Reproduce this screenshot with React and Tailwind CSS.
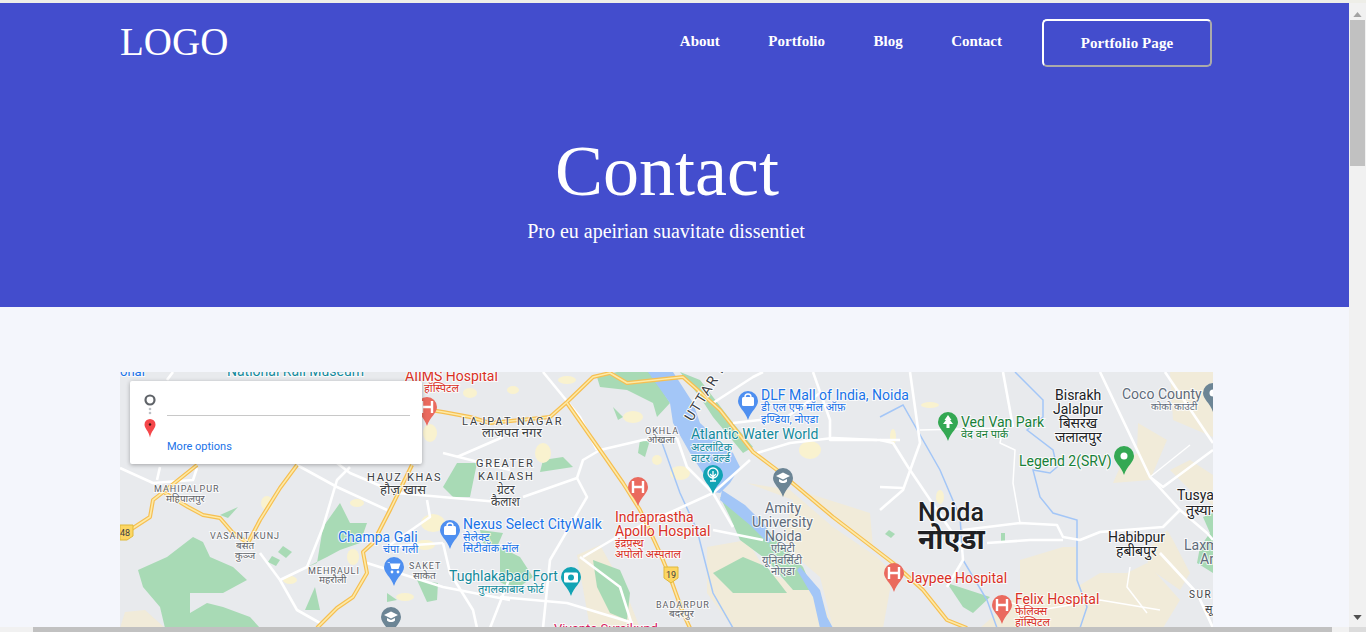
const navLinks = ["About", "Portfolio", "Blog", "Contact"];

const greens = [
  "M193 537 L167 557 L138 570 L143 587 L160 607 L165 628 L260 628 L250 617 L223 607 L207 603 L190 613 L190 593 L223 593 L247 580 L233 567 L210 557 L203 542Z",
  "M317 563 L323 527 L340 503 L350 523 L367 523 L360 543 L340 550 L327 557 L307 567Z",
  "M315 587 L320 610 L305 610Z",
  "M220 515 L238 507 L228 518Z",
  "M283 546 L292 552 L286 558 L278 552Z",
  "M272 556 L280 560 L276 566 L268 562Z",
  "M457 463 L477 463 L470 497 L453 497 L443 487Z",
  "M417 580 L438 583 L437 600 L427 602Z",
  "M387 593 L397 600 L387 602Z",
  "M480 530 L503 533 L497 547 L483 543Z",
  "M593 560 L620 570 L630 593 L627 620 L610 613 L597 587Z",
  "M500 547 L520 557 L533 577 L515 590 L500 582Z",
  "M543 460 L563 457 L573 467 L540 472Z",
  "M613 407 L623 417 L618 420Z",
  "M640 440 L650 440 L645 457 L638 453Z",
  "M597 377 L617 372 L650 372 L670 403 L657 417 L653 403 L627 390 L600 387Z",
  "M680 372 L700 380 L733 423 L753 447 L743 453 L713 417 L700 397Z",
  "M720 497 L760 520 L777 540 L803 567 L813 590 L793 590 L767 560 L740 540 L730 517Z",
  "M713 573 L743 557 L767 567 L787 593 L733 593Z",
  "M947 583 L990 597 L973 613 L963 607Z",
  "M1203 517 L1213 513 L1213 573 L1197 563 L1200 547 L1210 533Z",
  "M1001 533 L1005 533 L1005 541 L1001 541Z",
  "M889 530 L895 534 L891 538 L885 534Z",
];

const sands = [
  "M747 483 L790 490 L833 527 L877 557 L893 573 L883 628 L833 628 L820 577 L800 560 L783 540 L793 500Z",
  "M707 547 L747 540 L767 573 L820 593 L833 628 L733 628 L707 593Z",
  "M807 493 L870 513 L873 547 L833 520Z",
  "M1170 372 L1213 372 L1213 437 L1173 420Z",
  "M1138 423 L1167 440 L1150 480 L1113 483 L1120 467 L1137 453Z",
  "M1170 470 L1190 460 L1213 475 L1213 505 L1190 490Z",
  "M1020 560 L1063 547 L1077 547 L1077 587 L1100 573 L1127 573 L1147 563 L1180 600 L1163 628 L980 628 L1020 593Z",
  "M1167 530 L1173 540 L1190 573 L1180 590 L1147 567 L1150 547Z",
  "M577 555 L600 545 L625 590 L640 628 L590 628Z",
  "M120 628 L125 612 L145 610 L165 628Z",
];

const blobs = [
  [433, 523, 12, 9], [430, 433, 7, 9], [290, 580, 7, 4], [353, 557, 6, 8],
  [357, 503, 7, 4], [267, 503, 6, 7], [543, 453, 8, 10], [680, 473, 10, 7],
  [633, 417, 10, 6], [810, 450, 11, 9], [657, 460, 5, 5], [567, 380, 9, 4],
  [470, 393, 7, 5], [513, 390, 6, 4], [930, 405, 9, 3], [893, 437, 3, 8],
  [940, 497, 4, 7], [425, 545, 10, 5], [405, 597, 9, 4],
];

const whiteRoads = [
  "M910 372 L920 443 L903 490 L880 510",
  "M880 440 L893 443 L908 467 L962 547 L963 560 L947 587",
  "M1003 372 L1013 427",
  "M1100 372 L1150 477 L1180 510 L1207 533 L1213 540",
  "M1165 372 L1213 443",
  "M1150 477 L1163 487 L1213 450",
  "M1180 510 L1163 527 L1100 532 L1080 540 L1063 537 L1057 525 L1020 523 L963 530",
  "M987 543 L1030 540 L1063 540",
  "M1160 553 L1197 593 L1213 628",
  "M880 487 L903 488",
  "M713 403 L753 377 L763 372",
  "M813 372 L830 420 L830 440 L900 440",
  "M733 423 L787 417 L820 393",
  "M757 453 L790 443 L833 438 L877 440",
  "M713 493 L750 460",
  "M583 557 L617 537 L660 517 L713 493",
  "M543 372 L580 417 L597 450",
  "M523 497 L577 478 L583 460 L600 450 L643 440 L677 438",
  "M577 478 L587 497 L550 560 L543 628",
  "M677 438 L687 467 L713 493 L733 527",
  "M713 530 L763 540",
  "M500 597 L567 603 L633 623",
  "M580 557 L620 587 L633 628",
  "M120 468 L153 483 L193 480 L197 468",
  "M297 465 L337 487 L387 510",
  "M350 467 L337 480 L323 527 L307 567 L280 580",
  "M337 463 L350 473 L397 493 L510 503",
  "M260 553 L280 580 L297 610 L320 623",
  "M367 563 L443 587 L510 600",
  "M387 547 L443 543",
  "M443 543 L450 573 L473 610 L477 628",
  "M427 500 L430 517 L407 533 L387 547",
  "M443 453 L510 470",
  "M490 628 L510 577",
  "M457 457 L503 437",
  "M160 467 L157 480",
  "M173 372 L167 380",
];

const thinRoads = [
  "M920 430 L1003 428 L1000 443 L1015 450 L1013 483 L1020 523",
  "M1130 567 L1127 587 L1147 613",
  "M1150 477 L1190 445",
  "M1000 600 L1040 610 L1100 600 L1160 610",
];

const waterLines = [
  "M1015 372 L1043 400 L1043 417 L1027 430 L1053 450 L1057 467 L1050 473 L1033 470 L1040 497 L1053 513 L1077 520 L1077 580 L1087 607 L1080 628",
  "M880 417 L903 405 L940 470 L960 517 L963 560 L987 600 L997 628",
  "M660 437 L680 493 L697 530 L713 593 L733 628",
];

const TEAL = "#138a9c";

const labels = [
  { t: "onal", x: 120, y: 376, c: "#1a73e8", s: 13 },
  { t: "National Rail Museum", x: 227, y: 376, c: TEAL, s: 14 },
  { t: "AIIMS Hospital", x: 405, y: 381, c: "#d93025", s: 14 },
  { t: "हॉस्पिटल", x: 424, y: 392, c: "#d93025", s: 11 },
  { t: "LAJPAT NAGAR", x: 462, y: 425, c: "#3c4043", s: 11, l: 2 },
  { t: "लाजपत नगर", x: 482, y: 437, c: "#3c4043", s: 13 },
  { t: "GREATER", x: 476, y: 467, c: "#3c4043", s: 11, l: 1.7 },
  { t: "KAILASH", x: 478, y: 480, c: "#3c4043", s: 11, l: 1.7 },
  { t: "ग्रेटर", x: 497, y: 494, c: "#3c4043", s: 12 },
  { t: "कैलाश", x: 491, y: 506, c: "#3c4043", s: 12 },
  { t: "HAUZ KHAS", x: 367, y: 481, c: "#3c4043", s: 11, l: 1.7 },
  { t: "हौज़ खास", x: 380, y: 494, c: "#3c4043", s: 13 },
  { t: "MAHIPALPUR", x: 154, y: 492, c: "#5f6368", s: 9, l: 1 },
  { t: "महिपालपुर", x: 166, y: 502, c: "#5f6368", s: 10 },
  { t: "VASANT KUNJ", x: 210, y: 539, c: "#5f6368", s: 9, l: 1 },
  { t: "बसंत", x: 236, y: 549, c: "#5f6368", s: 10 },
  { t: "कुञ्ज", x: 235, y: 559, c: "#5f6368", s: 10 },
  { t: "MEHRAULI", x: 308, y: 574, c: "#5f6368", s: 9, l: 1 },
  { t: "महरौली", x: 319, y: 583, c: "#5f6368", s: 10 },
  { t: "SAKET", x: 409, y: 569, c: "#5f6368", s: 9, l: 1 },
  { t: "साकेत", x: 413, y: 579, c: "#5f6368", s: 10 },
  { t: "Champa Gali", x: 338, y: 542, c: "#1a73e8", s: 14 },
  { t: "चंपा गली", x: 383, y: 553, c: "#1a73e8", s: 11 },
  { t: "Nexus Select CityWalk", x: 463, y: 529, c: "#1a73e8", s: 14 },
  { t: "सेलेक्ट", x: 463, y: 541, c: "#1a73e8", s: 11 },
  { t: "सिटीवॉक मॉल", x: 463, y: 552, c: "#1a73e8", s: 11 },
  { t: "Tughlakabad Fort", x: 449, y: 581, c: TEAL, s: 14 },
  { t: "तुगलकाबाद फोर्ट", x: 478, y: 593, c: TEAL, s: 11 },
  { t: "OKHLA", x: 645, y: 434, c: "#5f6368", s: 9, l: 1 },
  { t: "ओखला", x: 647, y: 443, c: "#5f6368", s: 10 },
  { t: "DLF Mall of India, Noida", x: 761, y: 400, c: "#1a73e8", s: 14 },
  { t: "डी एल एफ मॉल ऑफ़", x: 761, y: 411, c: "#1a73e8", s: 11 },
  { t: "इण्डिया, नोएडा", x: 761, y: 423, c: "#1a73e8", s: 11 },
  { t: "Atlantic Water World", x: 691, y: 439, c: TEAL, s: 14 },
  { t: "अटलांटिक", x: 691, y: 451, c: TEAL, s: 11 },
  { t: "वाटर वर्ल्ड", x: 691, y: 462, c: TEAL, s: 11 },
  { t: "Indraprastha", x: 615, y: 522, c: "#d93025", s: 14 },
  { t: "Apollo Hospital", x: 615, y: 536, c: "#d93025", s: 14 },
  { t: "इंद्रप्रस्थ", x: 615, y: 547, c: "#d93025", s: 11 },
  { t: "अपोलो अस्पताल", x: 615, y: 558, c: "#d93025", s: 11 },
  { t: "Amity", x: 765, y: 513, c: "#5f6b7a", s: 14 },
  { t: "University", x: 752, y: 527, c: "#5f6b7a", s: 14 },
  { t: "Noida", x: 765, y: 541, c: "#5f6b7a", s: 14 },
  { t: "एमिटी", x: 771, y: 552, c: "#5f6b7a", s: 11 },
  { t: "यूनिवर्सिटी", x: 762, y: 564, c: "#5f6b7a", s: 11 },
  { t: "नोएडा", x: 771, y: 575, c: "#5f6b7a", s: 11 },
  { t: "BADARPUR", x: 656, y: 608, c: "#5f6368", s: 9, l: 1 },
  { t: "बदरपुर", x: 669, y: 617, c: "#5f6368", s: 10 },
  { t: "Vivanta Surajkund", x: 554, y: 633, c: "#d81b60", s: 13 },
  { t: "Bisrakh", x: 1055, y: 400, c: "#202124", s: 14 },
  { t: "Jalalpur", x: 1053, y: 414, c: "#202124", s: 14 },
  { t: "बिसरख", x: 1059, y: 428, c: "#202124", s: 14 },
  { t: "जलालपुर", x: 1055, y: 442, c: "#202124", s: 14 },
  { t: "Coco County", x: 1122, y: 399, c: "#5f6b7a", s: 14 },
  { t: "कोको काउंटी", x: 1151, y: 410, c: "#5f6b7a", s: 10 },
  { t: "Ved Van Park", x: 961, y: 427, c: "#188038", s: 14 },
  { t: "वेद वन पार्क", x: 961, y: 438, c: "#188038", s: 11 },
  { t: "Legend 2(SRV)", x: 1019, y: 466, c: "#188038", s: 14 },
  { t: "Noida", x: 918, y: 521, c: "#202124", s: 25, w: 500 },
  { t: "नोएडा", x: 918, y: 549, c: "#202124", s: 28, w: 700 },
  { t: "Habibpur", x: 1108, y: 542, c: "#202124", s: 14 },
  { t: "हबीबपुर", x: 1116, y: 556, c: "#202124", s: 14 },
  { t: "Tusyana", x: 1177, y: 500, c: "#202124", s: 14 },
  { t: "तुस्याना", x: 1186, y: 515, c: "#202124", s: 14 },
  { t: "Laxmi", x: 1184, y: 550, c: "#5f6b7a", s: 14 },
  { t: "Ar", x: 1200, y: 564, c: "#5f6b7a", s: 14 },
  { t: "SUR", x: 1189, y: 598, c: "#3c4043", s: 10, l: 1.6 },
  { t: "सू", x: 1205, y: 613, c: "#3c4043", s: 11 },
  { t: "Jaypee Hospital", x: 907, y: 583, c: "#d93025", s: 14 },
  { t: "Felix Hospital", x: 1015, y: 604, c: "#d93025", s: 14 },
  { t: "फेलिक्स", x: 1015, y: 615, c: "#d93025", s: 11 },
  { t: "हॉस्पिटल", x: 1015, y: 626, c: "#d93025", s: 11 },
];

const PIN = "M0-10a10 10 0 0 1 10 10c0 6-7 10-10 19c-3-9-10-13-10-19a10 10 0 0 1 10-10z";

const pins = [
  { x: 427, y: 407, c: "#ea6a5e", g: "h" },
  { x: 638, y: 487, c: "#ea6a5e", g: "h" },
  { x: 894, y: 573, c: "#ea6a5e", g: "h" },
  { x: 1002, y: 605, c: "#ea6a5e", g: "h" },
  { x: 450, y: 530, c: "#4e8ff0", g: "bag" },
  { x: 748, y: 401, c: "#4e8ff0", g: "bag" },
  { x: 394, y: 567, c: "#4e8ff0", g: "cart" },
  { x: 391, y: 617, c: "#6c8595", g: "cap" },
  { x: 783, y: 478, c: "#6c8595", g: "cap" },
  { x: 796, y: 637, c: "#6c8595", g: "cap" },
  { x: 713, y: 475, c: "#12a3b4", g: "tree" },
  { x: 571, y: 577, c: "#12a3b4", g: "cam" },
  { x: 948, y: 422, c: "#34a853", g: "pine" },
  { x: 1124, y: 456, c: "#34a853", g: "dot" },
  { x: 1213, y: 393, c: "#6c8595", g: "dot" },
];

function PinGlyph({ g }) {
  if (g === "h") return <path d="M-5-6v12M5-6v12M-5 0h10" stroke="#fff" strokeWidth="2.4" fill="none" />;
  if (g === "bag") return <g><rect x="-6" y="-4" width="12" height="9" rx="1.5" fill="#fff" /><path d="M-3-4a3 3 0 0 1 6 0" stroke="#fff" strokeWidth="1.4" fill="none" /></g>;
  if (g === "cart") return <g fill="#fff"><path d="M-7-5h2.5l2 7h7l2-5.5h-10z" /><circle cx="-2" cy="5" r="1.4" /><circle cx="4" cy="5" r="1.4" /></g>;
  if (g === "cap") return <g fill="#fff"><path d="M-7-2 0-5.5 7-2 0 1.5z" /><path d="M-4 1v2.5c2 2 6 2 8 0V1L0 3z" /></g>;
  if (g === "tree") return <g fill="none" stroke="#fff" strokeWidth="1.3"><circle cx="0" cy="-2" r="5" /><path d="M0-4v10M-3-1 0 2 3-1M-3 6h6" /></g>;
  if (g === "cam") return <g><rect x="-7" y="-4.5" width="14" height="10" rx="1.5" fill="#fff" /><circle cx="0" cy="0.5" r="3" fill="#12a3b4" /></g>;
  if (g === "pine") return <path d="M0-7-3.5-2H-2L-5 2h3.5v4h3V2H5L2-2h1.5z" fill="#fff" />;
  return <circle r="3.5" fill="#fff" />;
}

const HIGHWAYS = [
  "M130 530 L150 517 L153 500 L162 493 L197 465",
  "M165 493 L188 507 L203 515 L220 518 L233 533 L248 543 L260 520 L280 488 L297 465",
  "M412 465 L390 510 L373 543 L363 552 L367 573 L353 597 L337 608 L317 628",
  "M430 410 L443 412 L470 417 L490 423 L550 417 L567 402 L593 377 L610 373 L627 383 L683 377 L700 392 L720 410 L753 452 L777 470 L833 517 L893 563 L923 590 L947 620 L967 628",
  "M567 403 L600 450 L623 483 L640 510 L660 553 L670 577 L683 613 L690 628",
];

function MapDrawing() {
  return (
    <svg viewBox="120 372 1093 256" className="block w-full h-full" fontFamily="Roboto, 'Noto Sans', 'DejaVu Sans', sans-serif">
      <rect x="120" y="372" width="1093" height="256" fill="#e8eaed" />
      {sands.map((d, i) => <path key={i} d={d} fill="#f1ebd9" />)}
      {greens.map((d, i) => <path key={i} d={d} fill="#a8dab5" />)}
      {blobs.map(([x, y, rx, ry], i) => <ellipse key={i} cx={x} cy={y} rx={rx} ry={ry} fill="#f9f2cf" />)}
      <path d="M648 372 L673 372 L693 403 L700 423 L733 453 L740 467 L730 483 L720 493 L713 492 L703 473 L690 453 L673 423 L670 403Z" fill="#a3c6f7" />
      <path d="M722 490 L745 505 L765 525 L772 540 L768 543 L750 525 L720 500Z" fill="#a3c6f7" />
      <path d="M800 567 L820 590 L827 617 L833 628 L820 628 L813 597 L797 570Z" fill="#a3c6f7" />
      {waterLines.map((d, i) => <path key={i} d={d} fill="none" stroke="#a3c6f7" strokeWidth="1.5" />)}
      {whiteRoads.map((d, i) => <path key={i} d={d} fill="none" stroke="#fff" strokeWidth="2.6" strokeLinejoin="round" />)}
      {thinRoads.map((d, i) => <path key={i} d={d} fill="none" stroke="#fff" strokeWidth="1.5" strokeLinejoin="round" />)}
      <g fill="none" strokeLinejoin="round">
        <g stroke="#f6bf52" strokeWidth="4">
          {HIGHWAYS.map((d, i) => <path key={i} d={d} />)}
        </g>
        <g stroke="#fdeaa7" strokeWidth="1.6">
          {HIGHWAYS.map((d, i) => <path key={i} d={d} />)}
        </g>
      </g>
      <path d="M120 525h13v11l-6 4h-7z" fill="#fdd663" stroke="#e0b93a" />
      <text x="120" y="536" fontSize="9" fill="#3c4043">48</text>
      <path d="M664 567h14v11l-7 5-7-5z" fill="#fdd663" stroke="#e0b93a" />
      <text x="666" y="578" fontSize="9" fill="#3c4043">19</text>
      {labels.map((l, i) => (
        <text key={i} x={l.x} y={l.y} fontSize={l.s} fill={l.c} fontWeight={l.w || 400} letterSpacing={l.l || 0} stroke="#fff" strokeWidth="2" strokeOpacity="0.8" paintOrder="stroke">
          {l.t}
        </text>
      ))}
      <text x="692" y="422" fontSize="14" fill="#3c4043" letterSpacing="1.6" transform="rotate(-58 692 422)" stroke="#fff" strokeWidth="2" paintOrder="stroke">UTTAR P</text>
      {pins.map((p, i) => (
        <g key={i} transform={`translate(${p.x} ${p.y})`}>
          <path d={PIN} fill={p.c} />
          <PinGlyph g={p.g} />
        </g>
      ))}
    </svg>
  );
}

function DirectionsCard() {
  return (
    <div className="absolute left-[10px] top-[9px] w-[292px] h-[83px] bg-white rounded-[2px] shadow-[0_1px_4px_rgba(0,0,0,0.3)] flex">
      <svg viewBox="0 0 14 60" className="ml-[13px] mt-[13px] w-[14px] h-[60px] shrink-0">
        <circle cx="7" cy="6" r="4.5" fill="none" stroke="#5f6368" strokeWidth="2.2" />
        <circle cx="7" cy="15" r="1.3" fill="#bdc1c6" />
        <circle cx="7" cy="19" r="1.3" fill="#bdc1c6" />
        <path d="M7 25a5.500 5.500 0 0 1 5.500 5.500c0 4-4 6-5.500 13c-1.500-7-5.500-9-5.500-13A5.500 5.500 0 0 1 7 25z" fill="#f4474a" />
        <circle cx="7" cy="30.500" r="1.200" fill="#3c1510" />
      </svg>
      <div className="ml-[10px] w-[243px] flex flex-col">
        <div className="mt-[34px] h-px bg-[#c8c8c8]" />
        <a className="mt-[24px] text-[11px] leading-[14px] text-[#1a73e8] font-['Roboto',sans-serif]">More options</a>
      </div>
    </div>
  );
}

export default function App() {
  return (
    <div className="h-screen w-full overflow-hidden flex flex-col bg-[#f1f1f1] font-['Liberation_Serif',serif]">
      <div className="h-[3px] shrink-0 bg-[#eeeee8]" />
      <div className="flex-1 min-h-0 flex">
        <main className="flex-1 min-w-0 overflow-hidden bg-[#f4f6fc]">
          <header className="h-[304px] bg-[#434dcd] text-white pl-[120px] pr-[137px]">
            <nav className="flex items-start justify-between pt-[16px]">
              <a className="text-[39px] leading-[46px]">LOGO</a>
              <div className="flex items-start">
                <ul className="flex gap-[48.5px] mt-[13px] text-[15px] leading-[18px] font-bold">
                  {navLinks.map((item) => <li key={item}>{item}</li>)}
                </ul>
                <button className="ml-[40px] w-[170px] h-[48px] border-2 border-t-white border-l-white border-b-[#aaaaaa] border-r-[#aaaaaa] rounded-[5px] text-[15px] font-bold tracking-[0.1px]">
                  Portfolio Page
                </button>
              </div>
            </nav>
            <div className="text-center mt-[63px]">
              <h1 className="text-[72px] leading-[83px] pl-[2px]">Contact</h1>
              <p className="text-[20px] leading-[23px] mt-[7px]">Pro eu apeirian suavitate dissentiet</p>
            </div>
          </header>
          <section className="pl-[120px] pr-[136px] pt-[65px]">
            <div className="relative h-[256px] overflow-hidden">
              <MapDrawing />
              <DirectionsCard />
            </div>
          </section>
        </main>
        <aside className="w-[17px] shrink-0 bg-[#f1f1f1] flex flex-col items-center">
          <svg viewBox="0 0 10 6" className="w-[9px] h-[5px] mt-[9px] shrink-0"><path d="M5 0 10 6H0z" fill="#a3a3a3" /></svg>
          <div className="mt-[3px] w-[15px] h-[146px] bg-[#c1c1c1]" />
          <svg viewBox="0 0 10 6" className="w-[9px] h-[5px] mt-auto mb-[7px] shrink-0"><path d="M5 6 10 0H0z" fill="#505050" /></svg>
        </aside>
      </div>
      <div className="h-[5px] shrink-0 flex bg-[#f1f1f1]">
        <div className="ml-[33px] w-[1299px] bg-[#c1c1c1]" />
        <div className="ml-auto w-[17px] bg-[#dcdcdc]" />
      </div>
    </div>
  );
}
